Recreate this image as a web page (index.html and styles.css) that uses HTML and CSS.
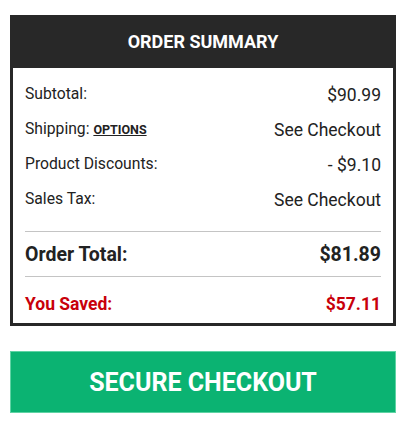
FILE: index.html
```html
<!DOCTYPE html>
<html>
<head>
<meta charset="utf-8">
<link rel="stylesheet" href="styles.css">
</head>
<body>
<div class="page">
  <section class="summary">
    <h2 class="summary-title">ORDER SUMMARY</h2>
    <div class="summary-body">
      <div class="row"><span class="label">Subtotal:</span><span class="value">$90.99</span></div>
      <div class="row"><span class="label">Shipping: <a class="options">OPTIONS</a></span><span class="value">See Checkout</span></div>
      <div class="row"><span class="label">Product Discounts:</span><span class="value">- $9.10</span></div>
      <div class="row"><span class="label">Sales Tax:</span><span class="value">See Checkout</span></div>
      <div class="row total"><span class="label">Order Total:</span><span class="value">$81.89</span></div>
      <div class="row saved"><span class="label">You Saved:</span><span class="value">$57.11</span></div>
    </div>
  </section>
  <button class="checkout">SECURE CHECKOUT</button>
</div>
</body>
</html>
```

FILE: styles.css
```css
* { box-sizing: border-box; }
html, body { margin: 0; padding: 0; background: #fff; }
body { font-family: Roboto, "Noto Sans", sans-serif; color: #222; }
.page { padding: 15px 7px 0 10px; width: 403px; }
.summary { width: 386px; border: 3px solid #282828; border-top: 0; }
.summary-title {
  margin: 0 -3px; background: #282828; color: #fff; height: 53px;
  display: flex; align-items: center; justify-content: center;
  font-size: 18px; font-weight: 700;
}
.summary-body { padding: 9px 12px 0 12px; }
.row { display: flex; justify-content: space-between; align-items: center; height: 35px; }
.label { font-size: 15.7px; color: #222; margin-bottom: 3px; }
.value { font-size: 17.5px; color: #222; }
.options { font-size: 12.5px; font-weight: 700; text-decoration: underline; color: #222; }
.total { border-top: 1px solid #c4c4c4; border-bottom: 1px solid #c4c4c4; height: 46px; margin-top: 14px; }
.total .label, .total .value { font-weight: 700; font-size: 19.5px; margin-bottom: 0; }
.saved { height: 46px; padding-top: 7px; }
.saved .label, .saved .value { font-weight: 700; font-size: 17.5px; color: #c8000a; margin-bottom: 0; }
.checkout {
  display: block; width: 386px; height: 62px; margin-top: 25px;
  background: #0bb372; border: 1px solid #5fd3a4; color: #fff;
  font-family: Roboto, sans-serif; font-weight: 700; font-size: 25px; padding: 0;
}
```
